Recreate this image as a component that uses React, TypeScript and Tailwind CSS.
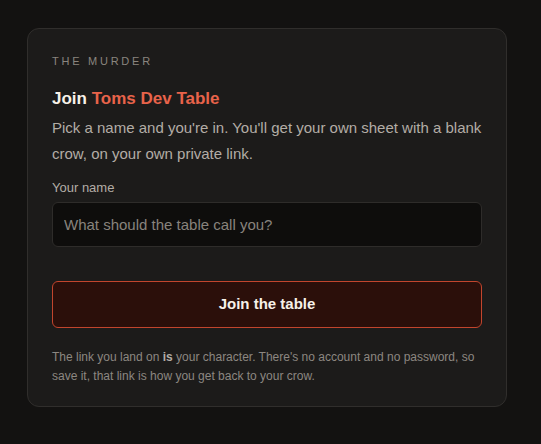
export default function App() {
  return (
    <div className="min-h-[444px] w-full bg-[#131211] pt-[28px] pl-[27px]" style={{ fontFamily: '"Liberation Sans", Arial, sans-serif' }}>
      <div className="w-[480px] rounded-xl border border-[#302e2c] bg-[#1c1b1a] px-6 pt-6 pb-[20px]">
        <div className="text-[11px] leading-[16px] tracking-[0.25em] text-[#8a857f]">THE MURDER</div>
        <h1 className="mt-[17px] text-[17px] font-bold leading-[25px] text-[#f7f1e8]">
          Join <span className="text-[#e8634a]">Toms Dev Table</span>
        </h1>
        <p className="mt-[4px] text-[15px] leading-[26px] text-[#b3ada6]">
          Pick a name and you're in. You'll get your own sheet with a blank crow, on your own private link.
        </p>
        <label className="mt-[11px] block text-[13px] leading-[20px] text-[#b3ada6]">Your name</label>
        <input
          className="mt-[4px] block h-[45px] w-full rounded-md border border-[#2e2c2a] bg-[#0e0d0c] px-[11px] text-[15px] text-[#e8e2da] placeholder:text-[#88837d] outline-none"
          placeholder="What should the table call you?"
        />
        <button className="mt-[34px] block h-[47px] w-full rounded-md border border-[#c2452d] bg-[#2b0f0a] text-[15px] font-bold text-[#f7f1e8]">
          Join the table
        </button>
        <p className="mt-[20px] text-[12px] leading-[19px] text-[#8c8781]">
          The link you land on <b className="font-bold text-[#b3ada6]">is</b> your character. There's no account and no password, so save it, that link is how you get back to your crow.
        </p>
      </div>
    </div>
  );
}
